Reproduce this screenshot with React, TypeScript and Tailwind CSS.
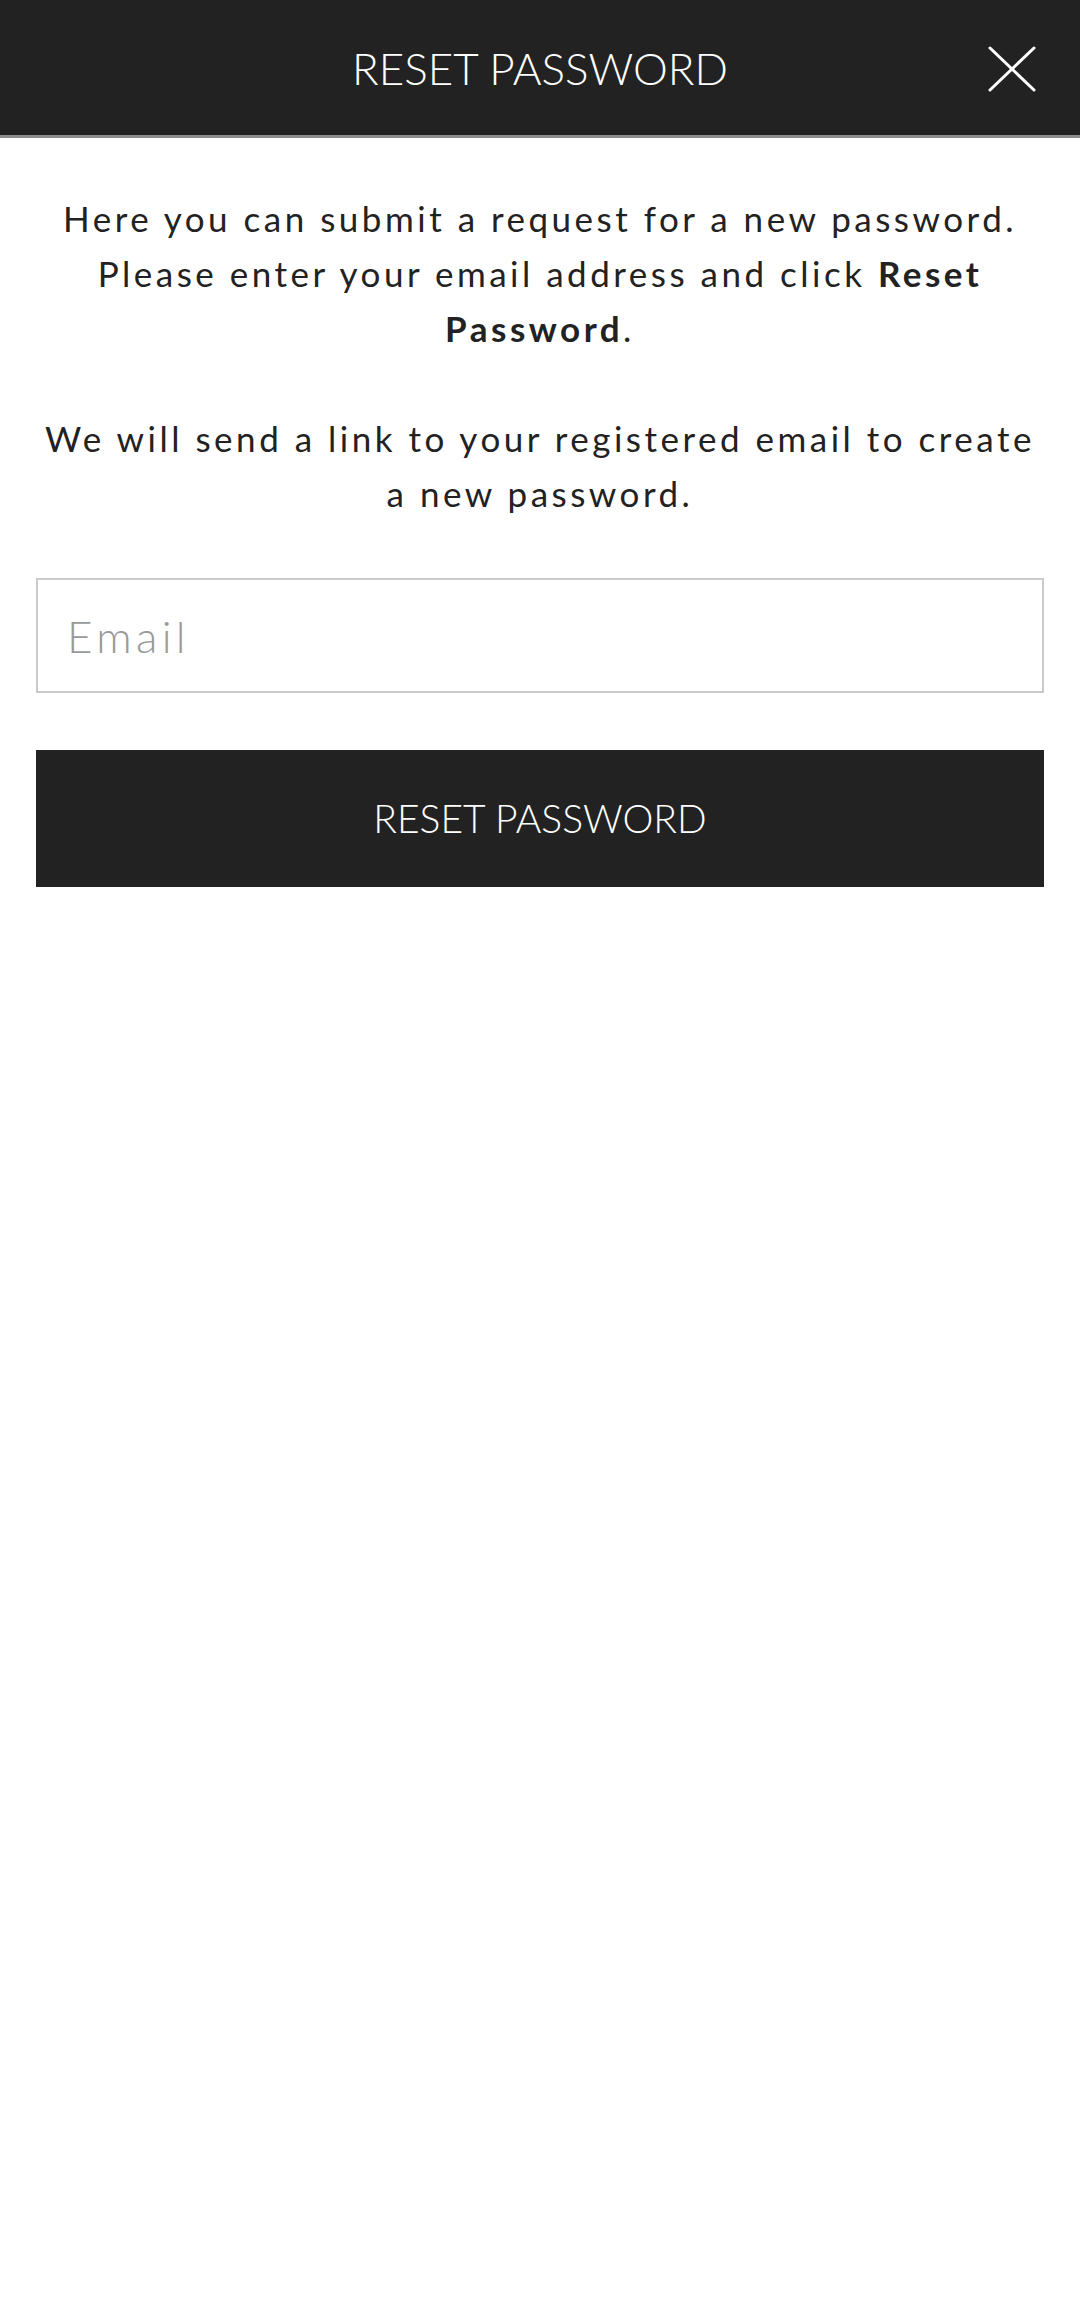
import React, { useState } from 'react';

const CloseIcon = () => (
  <svg width="48" height="46" viewBox="0 0 48 46" fill="none" stroke="white" strokeWidth="3" strokeLinecap="round">
    <line x1="2" y1="2" x2="46" y2="44" />
    <line x1="46" y1="2" x2="2" y2="44" />
  </svg>
);

export default function App() {
  const [email, setEmail] = useState('');

  return (
    <div className="min-h-screen bg-white font-['Lato','Liberation_Sans',sans-serif] text-[#222222]">
      <header className="relative flex h-[138px] items-center justify-center border-b-[3px] border-[#8c8c8c] bg-[#222222]">
        <h1 className="text-[44px] font-light text-white">RESET PASSWORD</h1>
        <button className="absolute right-[44px] top-[46px]" aria-label="Close">
          <CloseIcon />
        </button>
      </header>

      <main className="px-9 pt-[53px]">
        <div className="text-center text-[35px] leading-[55px] tracking-[0.1em]">
          <p>
            Here you can submit a request for a new password. Please enter your email address and click{' '}
            <strong className="font-bold">Reset Password</strong>.
          </p>
          <p className="mt-[55px]">We will send a link to your registered email to create a new password.</p>
        </div>

        <input
          type="email"
          value={email}
          onChange={(e) => setEmail(e.target.value)}
          placeholder="Email"
          className="mt-[57px] block h-[115px] w-full border-2 border-[#cacaca] px-[29px] text-[44px] font-light tracking-[0.1em] outline-none placeholder:text-[#999999]"
        />

        <button className="mt-[57px] flex h-[137px] w-full items-center justify-center bg-[#222222] text-[39px] font-light text-white">
          RESET PASSWORD
        </button>
      </main>
    </div>
  );
}
